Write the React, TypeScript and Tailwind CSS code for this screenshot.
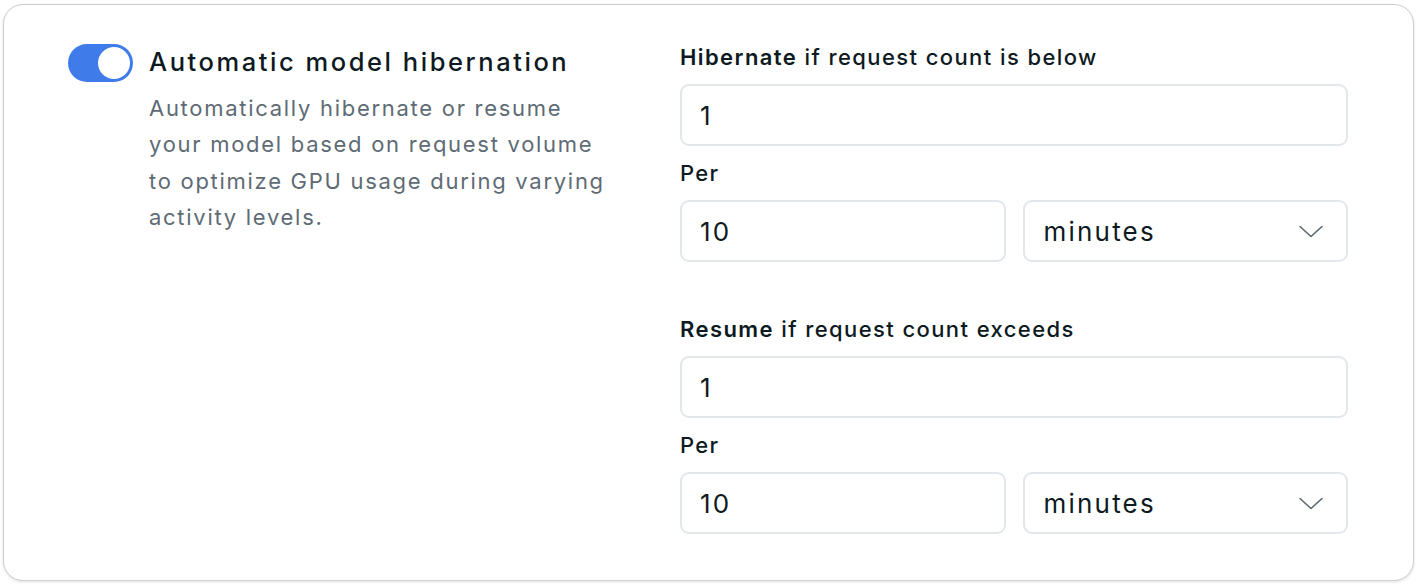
import React from "react";

const font = { fontFamily: "Inter, 'Noto Sans', sans-serif" };

function Chevron() {
  return (
    <svg width="24" height="13" viewBox="0 0 24 13" fill="none" className="shrink-0">
      <path d="M1 1.5 L12 11.5 L23 1.5" stroke="#5b6770" strokeWidth="1.6" strokeLinecap="round" strokeLinejoin="round" />
    </svg>
  );
}

function Field({ value }: { value: string }) {
  return (
    <div className="h-[62px] w-full rounded-[9px] border-2 border-[#e3e7eb] bg-white flex items-center pl-[18px] text-[26px] text-[#0e1a22] tracking-[0.08em]">
      {value}
    </div>
  );
}

function SelectField({ value }: { value: string }) {
  return (
    <div className="h-[62px] w-full rounded-[9px] border-2 border-[#e3e7eb] bg-white flex items-center justify-between pl-[19px] pr-[23px] text-[26px] text-[#0e1a22] tracking-[0.085em]">
      <span>{value}</span>
      <Chevron />
    </div>
  );
}

function Section({ bold, rest }: { bold: string; rest: string }) {
  return (
    <div className="flex flex-col gap-[12px]">
      <div className="h-[30px] leading-[30px] text-[22px] font-medium text-[#0e1a22] tracking-[0.064em] whitespace-nowrap">
        <span className="font-semibold">{bold}</span> {rest}
      </div>
      <Field value="1" />
      <div className="h-[30px] leading-[30px] text-[22px] font-medium text-[#0e1a22] tracking-[0.06em]">Per</div>
      <div className="grid grid-cols-2 gap-[17px]">
        <Field value="10" />
        <SelectField value="minutes" />
      </div>
    </div>
  );
}

export default function App() {
  return (
    <div className="w-[1419px] h-[584px] bg-white pt-[4px] pl-[3px]" style={font}>
      <div className="w-[1411px] h-[577px] rounded-[20px] border border-[#cfcfcf] shadow-[0_1px_3px_rgba(0,0,0,0.12)] bg-white flex pl-[64px] pr-[65px] pt-[37px]">
        <div className="w-[548px] flex gap-[16px] pt-[2px]">
          <div className="w-[65px] h-[38px] rounded-full bg-[#407bea] flex items-center justify-end pr-[3px] shrink-0">
            <div className="w-[32px] h-[32px] rounded-full bg-white" />
          </div>
          <div className="flex flex-col">
            <div className="text-[25.5px] leading-[36px] font-medium text-[#0e1a22] tracking-[0.1em] whitespace-nowrap">
              Automatic model hibernation
            </div>
            <div className="mt-[10px] text-[22px] leading-[36.3px] text-[#5e6b74] tracking-[0.078em]">
              Automatically hibernate or resume your model based on request volume to optimize GPU usage during varying activity levels.
            </div>
          </div>
        </div>
        <div className="ml-auto w-[668px] flex flex-col gap-[52px]">
          <Section bold="Hibernate" rest="if request count is below" />
          <Section bold="Resume" rest="if request count exceeds" />
        </div>
      </div>
    </div>
  );
}
